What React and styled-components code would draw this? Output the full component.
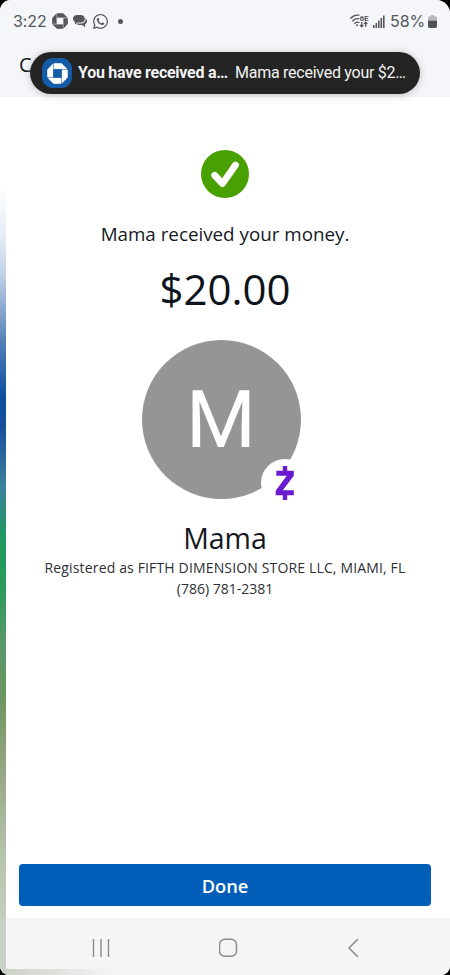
import React from "react";
import styled, { createGlobalStyle } from "styled-components";
import { FaWhatsapp } from "react-icons/fa";

const GlobalStyle = createGlobalStyle`
  body {
    margin: 0;
    background: #000;
  }
  * {
    box-sizing: border-box;
  }
`;

const Phone = styled.div`
  position: relative;
  display: flex;
  flex-direction: column;
  width: 450px;
  height: 975px;
  overflow: hidden;
  border-radius: 11px 14px 9px 9px;
  background: #fff;
  color: #15191f;
  font-family: "Open Sans", "Noto Sans", sans-serif;
`;

const Header = styled.header`
  height: 97px;
  background: #f4f6f9;
`;

const StatusBar = styled.div`
  display: flex;
  align-items: center;
  justify-content: space-between;
  height: 42px;
  padding: 0 13px 0 13px;
  color: #55575a;
  font-family: Inter, Roboto, sans-serif;
  font-size: 16px;
`;

const StatusGroup = styled.div`
  display: flex;
  align-items: center;
`;

const StatusText = styled.span`
  width: ${(p) => p.$width}px;
  margin-left: ${(p) => p.$gap || 0}px;
  letter-spacing: ${(p) => p.$spacing}px;
  white-space: nowrap;
`;

const Icon = styled.svg`
  display: block;
  flex: none;
  margin-left: ${(p) => p.$gap || 0}px;
`;

const WhatsApp = styled(FaWhatsapp)`
  margin-left: 5px;
`;

const Dot = styled.span`
  width: 5px;
  height: 5px;
  margin-left: 9px;
  border-radius: 50%;
  background: #55575a;
`;

const Title = styled.div`
  padding: 8px 0 0 19px;
  font-size: 20px;
  line-height: 30px;
`;

const Toast = styled.div`
  position: absolute;
  top: 52px;
  left: 30px;
  display: flex;
  align-items: center;
  width: 390px;
  height: 42px;
  padding-left: 12px;
  border-radius: 21px;
  background: #242424;
  box-shadow: 0 1px 8px rgba(0, 0, 0, 0.22);
  color: #f3f3f3;
  font-family: Roboto, sans-serif;
  font-size: 16px;
  letter-spacing: -0.26px;
  line-height: 20px;
  white-space: nowrap;
`;

const AppIcon = styled.div`
  display: flex;
  align-items: center;
  justify-content: center;
  width: 30px;
  height: 30px;
  margin-right: 6px;
  border-radius: 11px;
  background: #145ca8;
`;

const ToastTitle = styled.b`
  width: 157px;
`;

const Body = styled.main`
  display: flex;
  flex: 1;
`;

const EdgeLight = styled.div`
  width: 6px;
  background: linear-gradient(
    #fff 90px,
    #e8eef6 135px,
    #c0d1e6 178px,
    #5380b8 245px,
    #0b4f9f 300px,
    #174f9c 330px,
    #3a7f9c 388px,
    #1f985f 440px,
    #2b9b5b 490px,
    #54986a 540px,
    #6c955f 600px,
    #9aa988 680px,
    #b7c4ad 760px,
    #c2cebb 821px
  );
`;

const Content = styled.div`
  display: flex;
  flex: 1;
  flex-direction: column;
  align-items: center;
  padding: 53px 19px 12px 13px;
`;

const Message = styled.p`
  margin: 21px 0 0;
  font-size: 18.8px;
  line-height: 30px;
`;

const Amount = styled.div`
  margin-top: 13px;
  font-size: 42px;
  line-height: 54px;
  color: #0e141b;
`;

const Avatar = styled.div`
  position: relative;
  display: flex;
  align-items: center;
  justify-content: center;
  width: 159px;
  height: 159px;
  margin: 24px 8px 0 0;
  border-radius: 50%;
  background: #959595;
  color: #fff;
  font-family: Roboto, sans-serif;
  font-size: 80px;
`;

const Badge = styled.div`
  position: absolute;
  right: -8px;
  bottom: -8px;
  display: flex;
  align-items: center;
  justify-content: center;
  width: 48px;
  height: 48px;
  border-radius: 50%;
  background: #fff;
`;

const Name = styled.h1`
  margin: 19px 0 0;
  font-size: 28.5px;
  font-weight: 400;
  line-height: 40px;
`;

const Detail = styled.div`
  font-size: 14px;
  line-height: 20.5px;
  letter-spacing: ${(p) => p.$spacing || 0}px;
  color: #2d3034;
  white-space: nowrap;
`;

const DoneButton = styled.button`
  align-self: stretch;
  height: 42px;
  margin-top: auto;
  border: 0;
  border-radius: 4px;
  background: #005eb8;
  color: #fff;
  font-family: inherit;
  font-size: 18.3px;
  font-weight: 600;
`;

const NavBar = styled.nav`
  display: flex;
  align-items: center;
  justify-content: space-between;
  height: 57px;
  padding: 3px 91px 0 85px;
  border-left: 6px solid #c9d0c4;
  background: linear-gradient(90deg, #cbd2c6, #f5f5f8 110px) bottom / 100% 6px
      no-repeat,
    #f5f5f8;
  color: #8b8b8e;
`;

const ChaseMark = ({ size, gap, color, line }) => (
  <Icon
    width={size}
    height={size}
    $gap={gap}
    viewBox="0 0 24 24"
    fill={color}
    stroke={color}
    strokeWidth={line}
  >
    <path d="M.3 15.4c0 .5.4.9.8.9h5.7V.9L.3 7.7zM15.4 23.7c.5 0 .9-.4.9-.8v-5.7H.9l6.8 6.5zM23.7 8.6c0-.5-.4-.9-.8-.9h-5.7v15.4l6.5-6.8zM8.6.3c-.5 0-.9.4-.9.8v5.7h15.4L16.3.3H8.6z" />
  </Icon>
);

const ChatIcon = () => (
  <Icon width="14" height="13" $gap="5" viewBox="0 0 14 13" fill="#55575a">
    <path d="M4.2 0h3.6c2.5 0 4 1.6 4 3.8S10.300 7.600 7.800 7.600H4.400L2 9.500V7C.7 6.300 0 5.200 0 3.800 0 1.600 1.700 0 4.200 0z" />
    <path d="M12.600 3.200c.9.700 1.400 1.700 1.400 2.900 0 1.500-.7 2.600-1.900 3.200V12.300L9.200 10H6.800C5.300 10 4.200 9.400 3.600 8.400H8c2.800 0 4.700-1.900 4.700-4.500z" />
  </Icon>
);

const WifiIcon = () => (
  <Icon width="19" height="14" viewBox="0 0 19 14" fill="none" stroke="#55575a">
    <path
      d="M.7 4.200C3 1.800 5.800 .8 8.900 1.200M2.700 6.800C4.300 5.200 6.300 4.500 8.600 4.700M4.800 9.200c1.200-1.100 2.800-1.400 4.300-.7"
      strokeWidth="1.3"
      strokeLinecap="round"
    />
    <circle cx="7" cy="11.3" r="1" fill="#55575a" stroke="none" />
    <path d="M11.7 8v4.600M10 11l1.700 1.800 1.700-1.800M15.700 13V8.300M14 10l1.700-1.800L17.400 10" strokeWidth="1.2" />
    <text
      x="9.4"
      y="6.6"
      fill="#55575a"
      stroke="none"
      fontFamily="Roboto, sans-serif"
      fontSize="8"
      fontWeight="700"
    >
      6E
    </text>
  </Icon>
);

const SignalIcon = () => (
  <Icon width="12" height="13" $gap="4" viewBox="0 0 12 13" fill="#55575a">
    <path d="M0 10h1.6v3H0zM2.5 8h1.6v5H2.5zM5 5.5h1.6V13H5zM7.5 3h1.6v10H7.5zM10 0.5h1.6V13H10z" />
  </Icon>
);

const BatteryIcon = () => (
  <Icon width="9" height="13" $gap="3" viewBox="0 0 9 13">
    <path d="M3 0h3v1.2h1.3Q9 1.2 9 3v3.2H0V3q0-1.8 1.7-1.8H3z" fill="#b8b9bc" />
    <path d="M0 5.7h9v5.6Q9 13 7.3 13H1.7Q0 13 0 11.3z" fill="#505255" />
  </Icon>
);

const CheckIcon = () => (
  <Icon width="48" height="48" viewBox="0 0 48 48" fill="none">
    <circle cx="24" cy="24" r="24" fill="#48a100" />
    <path
      d="M13.7 25.3l7.8 8.3 13-18.6"
      stroke="#fff"
      strokeWidth="6.8"
      strokeLinecap="round"
      strokeLinejoin="round"
    />
  </Icon>
);

const ZelleIcon = () => (
  <Icon width="20" height="34" viewBox="0 0 20 34" fill="#6a1bd1">
    <path d="M7.800 0h4.400v4.800h6.600v4.900L7.800 24.300h11v4.900h-6.600V34H7.800v-4.800H.7v-4.500L11.700 9.700H1.300V4.800h6.500z" />
  </Icon>
);

const App = () => {
  return (
    <>
      <GlobalStyle />
      <Phone>
        <Header>
          <StatusBar>
            <StatusGroup>
              <StatusText $width={33} $spacing={-0.1}>3:22</StatusText>
              <ChaseMark size={16} gap={6} color="#55575a" line={0.4} />
              <ChatIcon />
              <WhatsApp size={17} />
              <Dot />
            </StatusGroup>
            <StatusGroup>
              <WifiIcon />
              <SignalIcon />
              <StatusText $gap={5} $width={35} $spacing={-0.1}>58%</StatusText>
              <BatteryIcon />
            </StatusGroup>
          </StatusBar>
          <Title>C</Title>
        </Header>
        <Body>
          <EdgeLight />
          <Content>
            <CheckIcon />
            <Message>Mama received your money.</Message>
            <Amount>$20.00</Amount>
            <Avatar>
              M
              <Badge>
                <ZelleIcon />
              </Badge>
            </Avatar>
            <Name>Mama</Name>
            <Detail $spacing={0.15}>
              Registered as FIFTH DIMENSION STORE LLC, MIAMI, FL
            </Detail>
            <Detail>(786) 781-2381</Detail>
            <DoneButton>Done</DoneButton>
          </Content>
        </Body>
        <NavBar>
          <Icon width="20" height="20" viewBox="0 0 20 20" stroke="currentColor" strokeWidth="1.4">
            <path d="M2.500 1v18M10 1v18M17.500 1v18" />
          </Icon>
          <Icon width="20" height="20" viewBox="1.5 0 20 20" fill="none" stroke="currentColor" strokeWidth="1.5">
            <rect x="2" y="1.200" width="17" height="17" rx="5.200" />
          </Icon>
          <Icon width="12" height="20" viewBox="0 0 12 20" fill="none" stroke="currentColor" strokeWidth="1.5">
            <path d="M11 1L2 10l9 9" />
          </Icon>
        </NavBar>
        <Toast>
          <AppIcon>
            <ChaseMark size={21} color="#fff" line={0.3} />
          </AppIcon>
          <ToastTitle>You have received a…</ToastTitle>
          <span>Mama received your $2…</span>
        </Toast>
      </Phone>
    </>
  );
};

export default App;
